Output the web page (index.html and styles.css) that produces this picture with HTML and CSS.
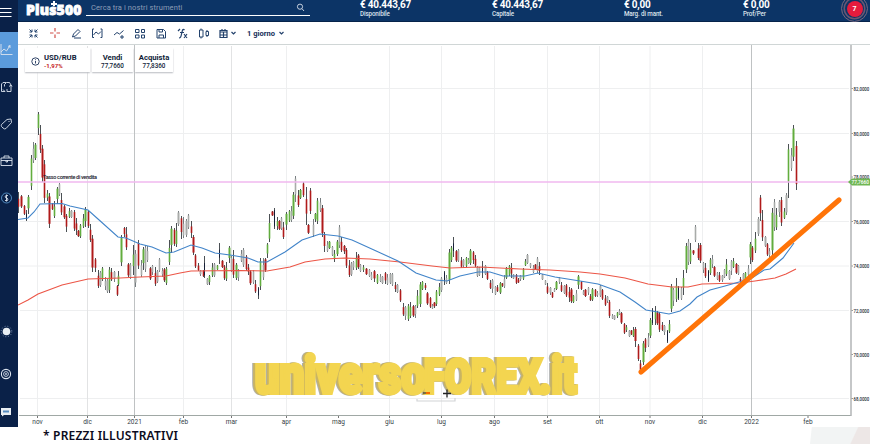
FILE: index.html
```html
<!DOCTYPE html>
<html lang="it">
<head>
<meta charset="utf-8">
<title>Plus500 USD/RUB</title>
<link rel="stylesheet" href="styles.css">
</head>
<body>
<div class="app">
  <nav class="sidebar">
    <div class="nav-item menu"><svg width="12" height="12" viewBox="0 0 12 12"><path d="M0 1.500H11.500M0 5.500H11.500M0 9.500H11.500" stroke="#fff" stroke-width="1.200"/></svg></div>
    <div class="nav-item active"><svg width="13" height="12" viewBox="0 0 13 12"><path d="M1 0V10.500H12.500M1 8L4 5L6.500 7L10 1.500V4M8 2.500L10 1.500" /></svg></div>
    <div class="nav-item"><svg width="13" height="12" viewBox="0 0 13 12"><path d="M5 10.500H1.500V3L3 1.500H6.500L4.500 3.500V5.500M3 8.500L5 10.500M7 10.500H11V4L9.500 1.500H7M11 4L12 5.500M11 4L9 5.500M7 10.500V8"/></svg></div>
    <div class="nav-item"><svg width="13" height="12" viewBox="0 0 13 12"><path d="M1.500 6.500L7 1.500L11 1L11.500 4.500L6 10.500Q4.500 11.500 3 10L1.500 8.500Q1 7.500 1.500 6.500ZM9 3V4"/></svg></div>
    <div class="nav-item"><svg width="13" height="12" viewBox="0 0 13 12"><path d="M1 3H12V10.500H1ZM4 3V1H9V3M1 5.500H12M6 5V7H7.500V5"/></svg></div>
    <div class="nav-item"><svg width="13" height="12" viewBox="0 0 13 12"><circle cx="6.500" cy="6" r="5" stroke="#5794c9"/><path d="M8 3.500Q5 3 5 5Q5.500 6 7 6Q8.500 7 7.500 8.500L5 8.500M6.500 2.500V9.500"/></svg></div>
    <div class="nav-item sun"><svg width="13" height="13" viewBox="0 0 13 13"><circle cx="6.500" cy="6.500" r="3.800" fill="#e9eef3" stroke="none"/><circle cx="6.500" cy="6.500" r="5.300" stroke="#8094b4" stroke-dasharray="1 1.800"/></svg></div>
    <div class="nav-item gear"><svg width="12" height="12" viewBox="0 0 12 12"><circle cx="6" cy="6" r="4.600" stroke-width="1.100"/><circle cx="6" cy="6" r="2.400"/><circle cx="6" cy="6" r=".6"/></svg></div>
    <div class="nav-item chat"><svg width="12" height="10" viewBox="0 0 12 10"><path d="M1 1H11V8H4L2 9.500V8H1Z" fill="#e9eef3" stroke="none"/><path d="M3 4.500H9" stroke="#568cc0" stroke-width="2"/></svg></div>
  </nav>
  <main class="main">
    <header class="header">
      <div class="logo">Plus500<i></i></div>
      <div class="search"><span>Cerca tra i nostri strumenti</span><svg width="9" height="9" viewBox="0 0 9 9"><circle cx="4" cy="3.700" r="2.600"/><path d="M6 5.700L8 8"/></svg></div>
      <div class="stat s1"><b>€ 40.443,67</b><small>Disponibile</small></div>
      <div class="stat s2"><b>€ 40.443,67</b><small>Capitale</small></div>
      <div class="stat s3"><b>€ 0,00</b><small>Marg. di mant.</small></div>
      <div class="stat s4"><b>€ 0,00</b><small>Prof/Per</small></div>
      <div class="alert"><span>7</span></div>
    </header>
    <div class="toolbar">
      <svg width="268" height="21" viewBox="18 23 268 21">
        <path d="M29.500 29.500L32 32M32 29.500V32H29.500M37.500 29.500L35 32M35 29.500V32H37.500M29.500 37.500L32 35M29.500 35H32V37.500M37.500 37.500L35 35M37.500 35H35V37.500"/>
        <path d="M55 28V31.500M55 34.500V38M50 33H53.500M56.500 33H60" stroke="#d04f48" stroke-width="1.200"/>
        <path d="M72.500 37L73.500 34L78 29.500L80 31.500L75.500 36ZM74 38H81"/>
        <path d="M94 29H92.500V37.500H94M100.500 29H102V37.500H100.500M93.500 35L96 32L98.500 34L101 31.500"/>
        <path d="M114 35L117 32.500L119.500 34L123.500 30.500M120 37H124M122 35V39"/>
        <path d="M135.500 29.500H139V32.500H135.500ZM141.500 29.500H144.500V32.500H141.500ZM135.500 35H139V38H135.500ZM141.500 35H144.500V38H141.500Z"/>
        <path d="M157 29.500H163.500L165.500 31.500V38H157ZM159 29.500V32H162.500V29.500M159 38V35H163.500V38"/>
        <path d="M178 31L180 29M179 38Q181 38 181.500 34L182.500 30Q183.500 29 184.500 30M180 32.500H184M184 34L187 38M187 34L184 38" stroke-width="1.200"/>
        <path d="M199.500 30H203V37H199.500ZM201 28.500V30M201 37V38.500M206 31.500H208.500V35.500H206ZM207 30V31.500M207 35.500V37"/>
        <path d="M220 30.500H227V37.500H220ZM220 32H227M222 29V31M225 29V31M223.500 32V37M220 35H227" stroke-width="1.200"/>
        <path d="M231.500 32L233.500 34L235.500 32M279.500 32L281.500 34L283.500 32" stroke-width="1.200"/>
        <text x="247" y="36.300" class="period" textLength="28">1 giorno</text>
      </svg>
    </div>
    <section class="chart">
      <svg class="plot" width="852" height="382" viewBox="18 45 852 382">
        <g id="grid"></g>
        <g id="candles"></g>
        <path class="ma slow" d="M18 305L28 300L38 294L62 285L88 279L120 278L140 277L166 276L180 273L191 271L240 270.500L267 271L290 267L305 262L325 259L345 258L370 259L400 262L432 266L450 268L480 267L520 269L550 270L580 272L600 274L625 278L648 284L672 287H688L702 284L740 283L755 281L775 278L786 274L796 269"/>
        <path class="ma fast" d="M18 219.500L28 218L34 212L40 204L62 203.500L70 206L88 210L98 219L118 237L126 238L140 244L152 247L166 253L174 252L191 245L202 248L215 253L230 255L248 258L258 262H267L285 252L302 240L320 234L338 236L352 240L374 250L398 261L416 273L436 280L447 281L460 276L478 272H490L503 276H525L538 273L555 277L580 281L598 284L620 292L635 302L646 310L658 312L669 314L680 311L690 304L697 297L710 290L725 286L739 282L752 278L764 270L770 269L783 258L794 243"/>
        <path d="M18 182H851" stroke="#f1b9ef" stroke-width="1.700"/>
        <text x="43" y="179" class="rate" textLength="54">Tasso corrente di vendita</text>
        <path d="M417 399V401H455V398" fill="none" stroke="#d2d4d6" stroke-width="1.200"/>
        <text y="392.800" class="mark"><tspan class="low" x="255" textLength="171" lengthAdjust="spacingAndGlyphs">universo</tspan><tspan class="cap" x="424" textLength="118" lengthAdjust="spacingAndGlyphs">FOREX</tspan><tspan class="low" x="539" textLength="38" lengthAdjust="spacingAndGlyphs">.it</tspan></text>
        <path d="M423 393H430" stroke="#333" stroke-width="1.200"/><path d="M426 393H430" stroke="#f56b00" stroke-width="2"/>
        <path d="M443 393.500H451M447 389.500V397.500" stroke="#222" stroke-width="1.300"/>
        <path d="M641 372L839 200" stroke="#ff7408" stroke-width="5" stroke-linecap="round"/>
        <path d="M848 182L852 178.500H870V185.500H852Z" fill="#6fb653"/>
        <text x="851.500" y="184.200" class="tag" textLength="17.500" lengthAdjust="spacingAndGlyphs">77,7660</text>
      </svg>
      <div class="quote">
        <div class="card pair"><svg width="9" height="9" viewBox="0 0 9 9"><circle cx="4.500" cy="4.500" r="3.700"/><path d="M4.500 4V6.500M4.500 2.300V3.200"/></svg><div><b>USD/RUB</b><em>-1,97%</em></div></div>
        <div class="card sell"><b>Vendi</b><span>77,7660</span></div>
        <div class="card buy"><b>Acquista</b><span>77,8360</span></div>
      </div>
    </section>
  </main>
</div>
<footer class="foot"><span>* PREZZI ILLUSTRATIVI</span><i></i></footer>
<script src="chart.js"></script>
</body>
</html>
```
FILE: styles.css
```css
* { box-sizing: border-box; }
body { margin: 0; width: 870px; height: 444px; overflow: hidden; background: #fff; font-family: Roboto, sans-serif; color: #101c38; }
.app { display: flex; height: 427px; }
svg { display: block; flex: none; fill: none; }
.sidebar { width: 18px; background: #0a2148; display: flex; flex-direction: column; }
.nav-item { height: 37px; display: flex; align-items: center; flex: none; }
.nav-item svg { stroke: #dbe3ee; stroke-width: .9; }
.menu { height: 32px; padding-bottom: 7px; }
.active { background: #5b9bdc; height: 36px; }
.sun { margin-top: 97px; }
.gear { margin-top: 4px; height: 40px; }
.chat { height: 35px; }
.main { width: 852px; }
.header { height: 22px; background: #0c3466; border-bottom: 1px solid #06234b; color: #fff; display: flex; position: relative; }
.logo { margin-left: 8px; width: 60px; font: 900 14px/20px "Noto Sans", sans-serif; letter-spacing: .15px; -webkit-text-stroke: .8px #fff; position: relative; white-space: nowrap; }
.logo i { position: absolute; left: 25px; top: 3px; width: 6px; height: 2px; background: #fff; }
.logo i::after { content: ""; position: absolute; left: 2px; top: -2px; width: 2px; height: 5px; background: #fff; }
.search { width: 224px; height: 16px; border-bottom: 1.500px solid #fff; display: flex; align-items: center; justify-content: space-between; padding: 0 5px 1px; font-size: 7.500px; color: #8c9db6; }
.search span { letter-spacing: .1px; }
.search svg { stroke: #d7dfea; stroke-width: .9; }
.stat { display: flex; flex-direction: column; flex: none; white-space: nowrap; }
.stat b { font-size: 10px; line-height: 10px; font-weight: 700; letter-spacing: -.25px; }
.stat small { font-size: 6.300px; line-height: 8px; font-weight: 500; color: #dce3ec; letter-spacing: -.15px; }
.s1 { margin-left: 50px; width: 132px; }
.s2 { width: 132px; }
.s3 { width: 119px; }
.s4 { width: 98px; }
.alert { width: 27px; height: 27px; margin-top: -5px; border: 1.500px solid #75677e; border-radius: 50%; box-shadow: inset 0 0 0 1.500px #0c3466, inset 0 0 0 3px #6a5772; display: flex; align-items: center; justify-content: center; flex: none; clip-path: inset(5px 0 0 0); }
.alert span { width: 16px; height: 16px; border-radius: 50%; background: #e41b3d; font: 700 7px/16px Roboto, sans-serif; text-align: center; }
.toolbar { height: 23px; padding-top: 1px; border-bottom: 1px solid #d0d6d6; }
.toolbar svg { stroke: #23426c; stroke-width: 1; }
.period { font-size: 7.500px; font-weight: 700; fill: #142d58; stroke: none; }
.chart { position: relative; height: 382px; }
.ma { fill: none; stroke-width: 1.100; }
.slow { stroke: #ec5546; }
.fast { stroke: #4184c9; }
.rate { font: 500 5.500px Roboto, sans-serif; fill: #17172a; }
.axis { font: 6.500px Roboto, sans-serif; fill: #333d45; }
.price { font: 500 5.500px Roboto, sans-serif; fill: #222c35; }
.tag { font: 500 5.300px Roboto, sans-serif; fill: #fff; }
.mark { font-family: Roboto, sans-serif; font-weight: 900; fill: #f3d550; stroke: #f3d550; stroke-width: 4; filter: drop-shadow(-2px .5px 0 #c9b462) drop-shadow(-1px .8px 0 #aeb0b0); }
.mark .low { font-size: 51px; }
.mark .cap { font-size: 49px; }
.quote { position: absolute; left: 7px; top: 3px; display: flex; gap: 2px; }
.card { height: 24px; background: #fff; box-shadow: 0 1px 1.500px #b9bcc1; display: flex; flex-direction: column; align-items: center; justify-content: center; font-size: 7px; line-height: 8px; padding-top: 3px; }
.card b { font-size: 7.700px; font-weight: 700; }
.card span { font-size: 6.300px; font-weight: 500; }
.pair { width: 65px; flex-direction: row; justify-content: flex-start; padding-left: 6px; gap: 4px; }
.pair svg { stroke: #1b3158; stroke-width: .9; }
.pair div { display: flex; flex-direction: column; }
.card em { font: 700 6px/7px Roboto, sans-serif; color: #c51a24; }
.sell { width: 41px; }
.buy { width: 38px; }
.foot { height: 17px; padding-left: 43px; display: flex; justify-content: space-between; font: 600 12px/18px "Noto Sans", sans-serif; letter-spacing: .2px; white-space: nowrap; color: #0b0b20; }
.foot i { width: 60px; background: linear-gradient(115deg, #f2f4f4 70%, #ede7e6 72%); clip-path: polygon(3% 0, 100% 0, 100% 100%, 0 100%); }
```
FILE: chart.js
```js
const make = (parent, tag, attrs, text) => {
  const el = document.createElementNS("http://www.w3.org/2000/svg", tag);
  for (const k in attrs) el.setAttribute(k, attrs[k]);
  if (text) el.textContent = text;
  parent.appendChild(el);
};
const line = (p, x1, y1, x2, y2, stroke, w = 1) =>
  make(p, "path", { d: `M${x1} ${y1}L${x2} ${y2}`, stroke, "stroke-width": w });

const grid = document.getElementById("grid");
const months = [[37.5, "nov"], [87.5, "dic"], [134.5, "2021"], [183.5, "feb"], [231.5, "mar"], [286.5, "apr"], [338.5, "mag"], [389.5, "giu"], [441.5, "lug"], [494.5, "ago"], [547.5, "set"], [599.5, "ott"], [650, "nov"], [702.5, "dic"], [751.5, "2022"], [808, "feb"]];
const prices = [[88.5, "82,0000"], [133.5, "80,0000"], [177, "78,0000"], [221.5, "76,0000"], [266, "74,0000"], [310.5, "72,0000"], [354.5, "70,0000"], [398.5, "68,0000"]];
for (const [y, label] of prices) {
  if (y !== 177 && y !== 354.5) line(grid, 20, y, 849, y, "#eeeff0");
  line(grid, 851, y, 853, y, "#999");
  make(grid, "text", { x: 853.5, y: y + 2, class: "price", textLength: 15.8, lengthAdjust: "spacingAndGlyphs" }, label);
}
for (const [x, label] of months) {
  const year = label.length === 4;
  if (x !== 338.5 && x !== 808) line(grid, x, year ? 45 : 46, x, 415, year ? "#bfc2c3" : x === 231.5 || x === 87.5 ? "#e2e3e4" : "#eeeff0");
  line(grid, x, 415, x, 418, "#777");
  make(grid, "text", { x, y: 423.7, class: "axis", "text-anchor": "middle" }, label);
}
line(grid, 19, 415.5, 851, 415.5, "#a0a8a5");
line(grid, 851, 45, 851, 416, "#b2b5b6", 1.5);

// x, high, low, direction
const data = `18 192 213 r;21 195 208 r;24 205 215 r;26 210 221 k;28 195 214 g;31 155 190 g;33 142 163 s;35.5 143 160 g;38 112 135 g;40 125 153 r;42 145 182 r;44 160 203 r;47 190 201 g;49 193 228 r;52 203 210 r;54 201 218 g;57 187 204 g;59 183 196 s;61 193 215 r;64 205 219 r;66 214 232 r;69 208 218 g;71 210 218 s;74 210 231 r;76 218 235 r;78 230 237 r;80 224 238 g;83 214 228 g;85 207 227 g;88 210 228 r;90 224 242 r;92 235 272 r
95 258 272 r;98 270 288 r;100 271 287 s;102 267 281 g;105 277 290 s;107 279 293 s;109 267 293 g;111 268 281 r;114 271 282 s;117 285 296 r;118.5 271 286 g;121 235 266 g;124 227 237 r;126 227 250 r;128 263 277 r;130 263 279 s;133 245 275 g;135 250 287 s;138 240 269 r;141 260 277 s;143 247 270 g;145 245 272 s;147 246 262 s;150 267 280 r;152 265 275 s;155 267 286 r;157 270 283 s;159 258 272 s;162 268 277 s;164 268 282 r;166 267 285 g;169 240 265 g
171.5 226 253 g;174 228 246 r;176 223 247 g;178.5 211 226 s;181 216 239 r;183 217 238 s;186 219 237 s;188.5 214 229 s;191 221 238 r;193 235 255 r;195.5 254 268 r;198 263 271 r;200 270 276 s;203 270 277 r;204.5 256 278 k;207 278 285 s;209.5 275 285 g;212 263 277 g;214 263 277 s;217 265 270 g;219.5 243 264 k;222 260 268 r;224 265 280 r;226 262 281 g;229 246 263 g;231 256 272 s;233.5 250 278 r;236 263 280 g;238.5 269 281 s;241 250 262 s;243.5 248 267 s;246 255 271 r;248 264 275 r;250 270 285 r;253 270 284 s;255 280 293 r;258 287 299 k;260 258 290 g;263 258 280 s;265 258 272 r;267.5 243 258 g;269.5 214 242 g;272 211 216 r;274 208 229 k;277 217 230 g;279 220 230 r;281 217 230 s;283 222 239 r;286 212 230 g;289 210 222 g;291 206 222 s;293.5 192 219 g;295.5 176 202 s;298 190 207 r;300 189 199 g;303 182 197 r;306 187 225 r;308 224 234 r;310.5 188 214 r;313 219 237 s;315 213 222 g;317.5 198 224 g;320 198 212 s;322.5 205 237 r;324.5 232 252 r;327 241 252 s;329 241 249 g;332 246 256 s;334.5 250 262 g;337 240 256 g;339 225 248 s;341.5 237 252 r;344 245 254 r;346.5 248 268 r;349 260 277 r;351 262 276 s;353.5 261 270 s;356 252 270 g;358 254 269 r
360.5 264 272 s;363 265 272 g;366 268 275 r;369 269 277 s;371 272 280 s;374 270 282 r;377 274 284 g;380 274 282 s;382 276 284 s;385 272 284 r;387 274 285 s;390 273 284 s;392 273 286 s;395 282 292 r;397 284 293 s;400 289 302 r;403 303 316 r;405 306 320 s;408 304 321 g;410 302 318 g;413 305 317 r;415 305 318 s;417 290 308 g;420 282 307 g;422.5 281 290 g;425 283 290 r;427 292 305 r;430 297 308 r;432 304 309 s;434.5 302 308 r;436.5 290 306 g;439 283 296 g;441.5 277 292 s;444 271 285 k;446 275 284 s;449 249 284 g;451 246 262 g;453 237 257 k;456 250 262 r;458 249 262 s;461 257 268 r;463 259 268 s;466 257 267 g;468 258 264 s;470 249 265 g;473 251 264 r;475 255 267 r;477 266 277 s;479 267 276 s;482 261 278 k;485 265 275 s;487 271 280 r;490 280 289 r;492 279 293 s;495 286 295 s;497 285 292 r;500 282 294 g;502 283 287 r;504.5 275 288 s;506.5 267 279 g;509 265 276 g;511 263 278 r;513 274 279 s
516 274 284 r;518 278 283 r;520.5 275 281 s;523 268 280 g;525 259 266 g;527.5 254 264 s;530 263 268 s;533 265 273 s;535 264 270 r;537 257 273 s;539.5 262 275 r;542 274 280 s;545 280 285 s;547 283 294 r;550 287 295 s;552 292 298 r;554 288 292 s;556.5 281 290 g;559 277 284 s;561 282 292 r;564 285 294 s;566 284 297 r;569 287 302 r;571 288 303 r;573 295 303 g;576 290 301 s;578 275 289 g;581 281 290 r;583 290 295 s;585 289 297 r;588 287 295 s;590 294 301 r;592.5 288 301 g;595 289 297 r;597 291 297 s;600 285 297 s;602 289 300 r;605 295 306 r;607 296 303 s;609 300 318 r;612 314 319 s;614 315 320 s;617 312 318 g;619 309 315 s;621 312 324 r;624 323 334 r;626 325 332 g;629 330 337 s;631 330 335 r;633 327 337 g;635.5 327 347 r;638 344 361 r;640.5 360 371 r;643 341 365 g;645 338 352 r;648 333 347 s;650 318 338 g;652.5 308 325 k;655 306 325 g;657 311 325 r;659 312 332 r;662 322 331 r;664.5 325 335 s;667 330 343 k;669 320 333 g
671 284 312 g;673 288 306 s;676 278 302 g;678 286 300 k;681 287 300 s;683 270 295 g;686 243 273 g;688 239 265 s;690.5 243 264 g;693 250 255 r;695 225 242 s;698 243 260 r;700 243 263 r;703 262 273 s;705 263 278 r;708 270 282 k;710 258 275 g;712 255 268 s;714 266 277 r;717 272 280 s;719.5 272 282 r;722 275 282 s;724 269 278 s;726.5 259 276 g;729 270 280 s;731.5 260 275 s;733.5 258 268 g;736 263 274 r;738 265 275 s;740.5 277 283 r;743 273 283 s;745.5 272 280 g;748 265 276 s;750 242 264 g;752 246 262 r;755 232 253 g;758 217 236 s;760 195 221 r;762 210 241 r;765 236 247 s;767 243 256 r;769 248 258 s;772 208 256 g;774.5 199 231 s;776.5 208 230 g;779 200 217 s;781 197 226 r;784 208 219 g;786 193 215 s;788.5 144 198 g;791 148 171 s;793.5 125 161 g;796 141 190 r`;
const body = { g: "#62ad3e", r: "#b01a1a", k: "#172038", s: "#a8aba9" };
const layer = document.getElementById("candles");
data.split(/[;\n]/).forEach((row, i) => {
  const [x, hi, lo, dir] = row.trim().split(" ");
  const top = +hi, bottom = +lo, span = bottom - top, px = Math.floor(+x) + .5;
  line(layer, px, top, px, bottom, dir === "s" ? "#777d80" : "#4b5054");
  const a = top + span * (i % 3 ? .1 : .32), b = bottom - span * (i % 4 ? .12 : .3);
  line(layer, px, a, px, b, body[dir], dir === "k" ? 1 : i % 3 === 1 ? 2 : 1.6);
});
```
